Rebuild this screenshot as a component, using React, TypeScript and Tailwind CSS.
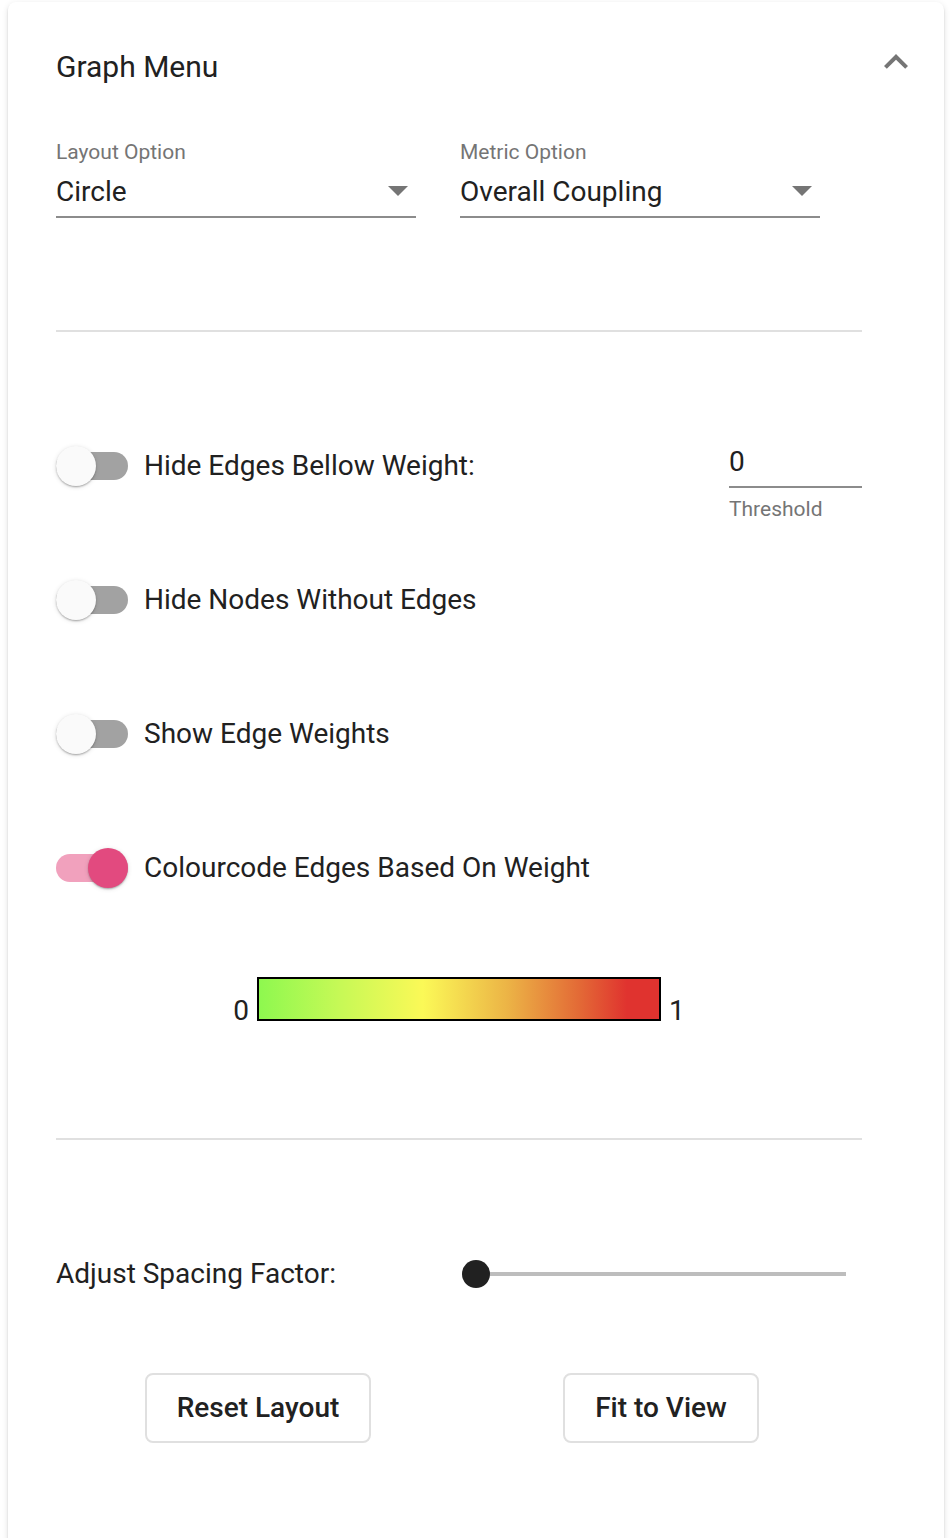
import React from 'react';

const font = { fontFamily: 'Roboto, "Noto Sans", Arial, sans-serif' };

function SelectField({ label, value }: { label: string; value: string }) {
  return (
    <div className="w-[360px]">
      <div className="text-[21px] leading-[24px] text-[#757575]">{label}</div>
      <div className="relative pt-[12px] pb-[8px] border-b-2 border-[#8c8c8c]">
        <div className="text-[28px] leading-[32px] text-[#212121]">{value}</div>
        <svg className="absolute right-[8px] top-[22px]" width="20" height="10" viewBox="0 0 20 10">
          <path d="M0 0 L20 0 L10 10z" fill="#757575" />
        </svg>
      </div>
    </div>
  );
}

function Toggle({ on }: { on?: boolean }) {
  return (
    <div className="relative w-[72px] h-[40px] shrink-0">
      <div className={`mt-[6px] w-[72px] h-[28px] rounded-full ${on ? 'bg-[#f1a1bd]' : 'bg-[#a2a2a2]'}`} />
      <div
        className={`absolute top-0 w-[40px] h-[40px] rounded-full shadow-[0_2px_2px_-1px_rgba(0,0,0,0.2),0_1px_2px_0_rgba(0,0,0,0.14),0_1px_5px_0_rgba(0,0,0,0.12)] ${
          on ? 'left-[32px] bg-[#e24a7f]' : 'left-0 bg-[#fafafa]'
        }`}
      />
    </div>
  );
}

function SwitchRow({ label, on, children }: { label: string; on?: boolean; children?: React.ReactNode }) {
  return (
    <div className="flex h-[134px] items-center justify-between">
      <div className="flex items-center">
        <Toggle on={on} />
        <span className="ml-[16px] text-[28px] leading-[32px] text-[#212121]">{label}</span>
      </div>
      {children}
    </div>
  );
}

export default function App() {
  return (
    <div className="min-h-screen bg-white pt-[2px] pl-[8px]" style={font}>
      <div className="w-[936px] min-h-[1560px] bg-white rounded-[8px] shadow-[0_4px_2px_-2px_rgba(0,0,0,0.2),0_2px_2px_0_rgba(0,0,0,0.14),0_2px_6px_0_rgba(0,0,0,0.12)]">
        {/* Panel header */}
        <div className="h-[130px] pl-[48px] pr-[24px] flex items-center justify-between">
          <span className="text-[30px] leading-[32px] text-[#212121]">Graph Menu</span>
          <svg className="mb-[10px]" width="48" height="48" viewBox="0 0 24 24">
            <path d="M12 8l-6 6 1.41 1.41L12 10.83l4.59 4.58L18 14z" fill="#757575" />
          </svg>
        </div>

        <div className="px-[48px]">
          <div className="w-[806px]">
            {/* Selects */}
            <div className="pt-[8px] grid grid-cols-[404px_402px]">
              <SelectField label="Layout Option" value="Circle" />
              <SelectField label="Metric Option" value="Overall Coupling" />
            </div>

            <div className="mt-[112px] h-[2px] bg-[#e0e0e0]" />

            {/* Switches */}
            <div className="mt-[67px]">
              <SwitchRow label="Hide Edges Bellow Weight:">
                <div className="self-start mt-[47px] w-[133px]">
                  <div className="pb-[8px] border-b-2 border-[#8c8c8c] text-[28px] leading-[32px] text-[#212121]">0</div>
                  <div className="mt-[9px] text-[21px] leading-[24px] text-[#757575]">Threshold</div>
                </div>
              </SwitchRow>
              <SwitchRow label="Hide Nodes Without Edges" />
              <SwitchRow label="Show Edge Weights" />
              <SwitchRow label="Colourcode Edges Based On Weight" on />
            </div>

            {/* Colour scale */}
            <div className="mt-[42px] flex items-end justify-center">
              <span className="text-[28px] leading-[32px] text-[#212121]">0</span>
              <div className="mx-[8px] mb-[6px] w-[404px] h-[44px] border-2 border-black bg-[linear-gradient(to_right,#8ef84f_0%,#c6f956_20%,#fbf957_41%,#ecb446_62%,#e36a36_80%,#e0332f_92%,#e0332f_100%)]" />
              <span className="text-[28px] leading-[32px] text-[#212121]">1</span>
            </div>

            <div className="mt-[111px] h-[2px] bg-[#e0e0e0]" />

            {/* Spacing slider */}
            <div className="mt-[114px] h-[40px] grid grid-cols-[404px_402px] items-center">
              <span className="text-[28px] leading-[32px] text-[#212121]">Adjust Spacing Factor:</span>
              <div className="relative h-[40px] flex items-center">
                <div className="ml-[16px] w-[370px] h-[4px] bg-[#bdbdbd]" />
                <div className="absolute left-[2px] top-[6px] w-[28px] h-[28px] rounded-full bg-[#212121]" />
              </div>
            </div>

            {/* Buttons */}
            <div className="mt-[79px] grid grid-cols-[404px_402px] justify-items-center">
              <button className="px-[30px] py-[17px] border-2 border-[#e0e0e0] rounded-[8px] bg-white text-[28px] leading-[32px] font-medium text-[#212121]">
                Reset Layout
              </button>
              <button className="px-[30px] py-[17px] border-2 border-[#e0e0e0] rounded-[8px] bg-white text-[28px] leading-[32px] font-medium text-[#212121]">
                Fit to View
              </button>
            </div>
          </div>
        </div>
      </div>
    </div>
  );
}
